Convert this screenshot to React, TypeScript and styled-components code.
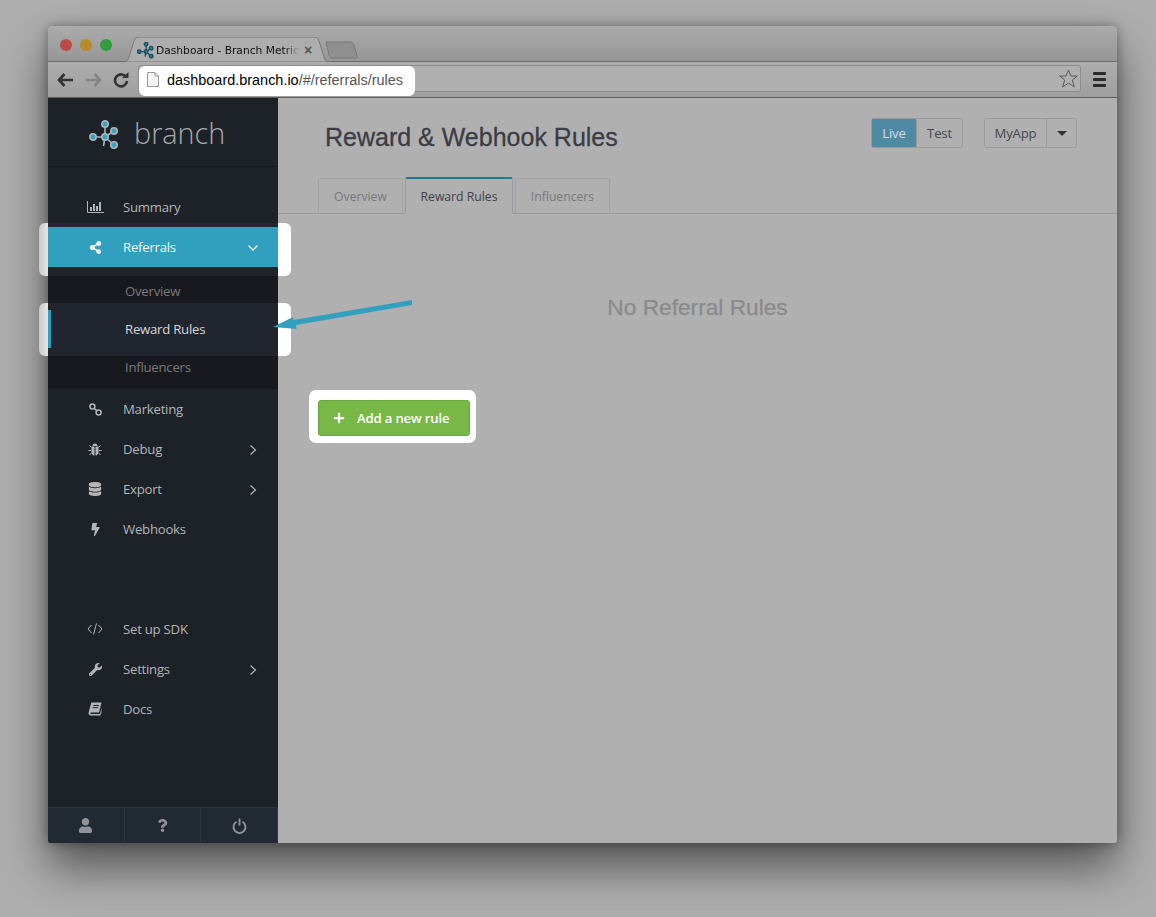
import React from 'react';
import styled, { createGlobalStyle } from 'styled-components';
import { FaBolt, FaDatabase, FaPlus, FaQuestion, FaShareAlt, FaUser, FaWrench } from 'react-icons/fa';

const Global = createGlobalStyle`
  html, body {
    margin: 0;
    padding: 0;
    background: #aeaeae;
  }
  * {
    box-sizing: border-box;
  }
`;

const Page = styled.div`
  width: 1156px;
  height: 917px;
  padding: 26px 39px 74px 48px;
  overflow: hidden;
  background: #aeaeae;
`;

const Window = styled.div`
  position: relative;
  display: flex;
  flex-direction: column;
  height: 817px;
  border-radius: 5px 5px 3px 3px;
  background: #b0b0b0;
  box-shadow: 0 24px 46px rgba(0, 0, 0, 0.52), 0 0 12px rgba(0, 0, 0, 0.35);
`;

const TabStrip = styled.div`
  display: flex;
  align-items: flex-end;
  height: 36px;
  padding-left: 12px;
  border-radius: 5px 5px 0 0;
  border-bottom: 1px solid #6e6e6e;
  background: linear-gradient(#ababab, #969696);
`;

const Lights = styled.div`
  display: flex;
  gap: 8px;
  align-self: center;
  margin: 2px 11px 0 0;
`;

const Light = styled.span<{ $color: string }>`
  width: 12px;
  height: 12px;
  border-radius: 50%;
  background: ${(p) => p.$color};
`;

const BrowserTab = styled.div`
  position: relative;
  display: flex;
  align-items: center;
  width: 207px;
  height: 25px;
  margin: 0 0 -1px 0;
  padding: 1px 0 0 14px;
`;

const TabShape = styled.svg`
  position: absolute;
  left: 0;
  top: 0;
`;

const TabTitle = styled.span`
  position: relative;
  margin-left: 2px;
  white-space: nowrap;
  font: 10.7px 'DejaVu Sans', sans-serif;
  color: #111;
  -webkit-mask-image: linear-gradient(90deg, #000 90%, transparent);
  mask-image: linear-gradient(90deg, #000 90%, transparent);
`;

const TabClose = styled.span`
  position: relative;
  margin-left: 5px;
  font: bold 14px 'Liberation Sans', sans-serif;
  color: #555;
`;

const NewTab = styled.svg`
  margin: 0 0 2px -5px;
`;

const Toolbar = styled.div`
  display: flex;
  align-items: center;
  height: 36px;
  padding: 0 11px 0 9px;
  border-bottom: 1px solid #5f5f5f;
  background: linear-gradient(#adadad, #9f9f9f);
`;

const NavIcon = styled.svg<{ $gap?: number }>`
  margin-right: ${(p) => p.$gap ?? 11}px;
`;

const Omnibox = styled.div`
  display: flex;
  flex: 1;
  align-items: flex-start;
  justify-content: space-between;
  height: 27px;
  margin: -2px 12px 0 9px;
  border: 1px solid #8d8d8d;
  border-radius: 3px;
  background: #b0b0b0;
`;

const UrlChip = styled.div`
  position: relative;
  z-index: 2;
  display: flex;
  align-items: center;
  width: 276px;
  height: 30px;
  margin: 0;
  padding: 0 0 3px 8px;
  border-radius: 6px;
  background: #fff;
  font: 14.45px 'Liberation Sans', sans-serif;
  color: #000;
`;

const UrlPath = styled.span`
  color: #555;
`;

const PageIcon = styled.svg`
  margin-right: 8px;
`;

const StarIcon = styled.svg`
  margin: 3px 2px 0 0;
`;

const Burger = styled.div`
  display: flex;
  flex-direction: column;
  gap: 3px;
  width: 13px;
  margin-top: -1px;
`;

const BurgerBar = styled.span`
  height: 3px;
  border-radius: 1px;
  background: #2b2b2b;
`;

const Body = styled.div`
  display: flex;
  flex: 1;
  min-height: 0;
`;

const Sidebar = styled.aside`
  position: relative;
  z-index: 1;
  display: flex;
  flex-direction: column;
  width: 230px;
  border-radius: 0 0 0 3px;
  background: #1d2128;
`;

const LogoBar = styled.div`
  display: flex;
  align-items: center;
  gap: 15px;
  height: 69px;
  padding-left: 41px;
  border-bottom: 1px solid #171a1f;
`;

const LogoText = styled.span`
  font: 300 28.8px 'Open Sans', sans-serif;
  color: #a7a9ab;
`;

const LogoMark = styled.svg<{ $shift: number }>`
  position: relative;
  flex: none;
  margin-top: ${(p) => p.$shift}px;
`;

const NavList = styled.nav`
  display: flex;
  flex-direction: column;
  flex: 1;
  padding-top: 20px;
`;

const NavGroup = styled.div`
  margin-bottom: 60px;
`;

const NavRow = styled.div<{ $open?: boolean }>`
  position: relative;
  display: flex;
  align-items: center;
  height: 40px;
  padding: 0 19px 0 38px;
  font: 13.2px 'Open Sans', sans-serif;
  letter-spacing: -0.25px;
  color: ${(p) => (p.$open ? '#f2f7f9' : '#b3b5b7')};
  background: ${(p) => (p.$open ? '#31a0bf' : 'transparent')};
  box-shadow: ${(p) => (p.$open ? '0 -4px 0 #222730' : 'none')};

  &::before {
    content: ${(p) => (p.$open ? "''" : 'none')};
    position: absolute;
    inset: -4px -13px -9px -9px;
    z-index: -1;
    border-radius: 6px;
    background: linear-gradient(90deg, #c9c9c9, #e4e4e4 9px, #fff 9px);
  }
`;

const RowLabel = styled.span`
  margin-bottom: 0;
`;

const RowIcon = styled.span`
  display: flex;
  justify-content: center;
  width: 18px;
  margin-right: 19px;
  font-size: 14px;
`;

const RowChevron = styled.svg<{ $right?: number }>`
  margin: 2px ${(p) => p.$right ?? 0}px 0 auto;
`;

const SubMenu = styled.div`
  padding: 5px 0 3px;
  background: linear-gradient(#20252c 9px, #17191e 9px);
`;

const SubRow = styled.div<{ $active?: boolean }>`
  position: relative;
  display: flex;
  align-items: center;
  height: 38px;
  padding: 0 0 0 77px;
  font: 13.2px 'Open Sans', sans-serif;
  letter-spacing: -0.25px;
  color: ${(p) => (p.$active ? '#d5d6d8' : '#77797c')};
  background: ${(p) => (p.$active ? '#21252d' : 'transparent')};
  box-shadow: ${(p) => (p.$active ? 'inset 3px 0 0 #31a0bf, 0 -7px 0 #21252d, 0 8px 0 #21252d' : 'none')};

  &::before {
    content: ${(p) => (p.$active ? "''" : 'none')};
    position: absolute;
    inset: -7px -13px -8px -9px;
    z-index: -1;
    border-radius: 6px;
    background: linear-gradient(90deg, #c9c9c9, #e4e4e4 9px, #fff 9px);
  }
`;

const SideFooter = styled.div`
  display: flex;
  height: 36px;
  border-top: 1px solid #2c343c;
  border-radius: 0 0 0 3px;
  background: #212933;
`;

const FooterCell = styled.div`
  display: flex;
  flex: 1;
  align-items: center;
  justify-content: center;
  border-right: 1px solid #2c343c;
  font-size: 15px;
  color: #8f9296;
`;

const Main = styled.main`
  flex: 1;
  min-width: 0;
`;

const Header = styled.header`
  display: flex;
  justify-content: space-between;
  height: 79px;
  padding: 20px 40px 0 47px;
`;

const Title = styled.h1`
  margin: 0;
  font: 400 25px/38px 'Liberation Sans', sans-serif;
  color: #3b3c45;
  -webkit-text-stroke: 0.3px #3b3c45;
`;

const Controls = styled.div`
  display: flex;
  gap: 21px;
  align-items: flex-start;
`;

const BtnGroup = styled.div`
  display: flex;
  height: 30px;
  border: 1px solid #9a9a9a;
  border-radius: 3px;
`;

const GroupBtn = styled.div<{ $active?: boolean; $width: number }>`
  display: flex;
  align-items: center;
  justify-content: center;
  width: ${(p) => p.$width}px;
  font: 13.2px 'Open Sans', sans-serif;
  letter-spacing: -0.2px;
  color: ${(p) => (p.$active ? '#d3dde2' : '#46474f')};
  background: ${(p) => (p.$active ? '#4f8aa5' : 'transparent')};
  & + & {
    border-left: 1px solid #9a9a9a;
  }
`;

const Caret = styled.span`
  border-top: 5px solid #33343c;
  border-left: 5px solid transparent;
  border-right: 5px solid transparent;
`;

const Tabs = styled.div`
  display: flex;
  align-items: flex-end;
  gap: 2px;
  height: 37px;
  padding-left: 40px;
  border-bottom: 1px solid #9a9aa2;
`;

const PageTab = styled.div<{ $active?: boolean; $width: number }>`
  display: flex;
  align-items: center;
  justify-content: center;
  width: ${(p) => p.$width}px;
  height: ${(p) => (p.$active ? 37 : 35)}px;
  margin-bottom: ${(p) => (p.$active ? -1 : 0)}px;
  border: 1px solid ${(p) => (p.$active ? '#9a9aa2' : '#a3a3a3')};
  border-top: ${(p) => (p.$active ? '2px solid #1f7a94' : '1px solid #a3a3a3')};
  border-bottom: ${(p) => (p.$active ? '1px solid #b0b0b0' : '0')};
  border-radius: 2px 2px 0 0;
  font: 12.2px 'Open Sans', sans-serif;
  color: ${(p) => (p.$active ? '#3f4048' : '#77787c')};
`;

const Empty = styled.div`
  padding-top: 79px;
  text-align: center;
  font: 22.7px/28px 'Liberation Sans', sans-serif;
  color: #8a8a8c;
  -webkit-text-stroke: 0.25px #8a8a8c;
`;

const AddWrap = styled.div`
  position: relative;
  width: max-content;
  margin: 79px 0 0 40px;

  &::before {
    content: '';
    position: absolute;
    inset: -10px -6px -7px -9px;
    border-radius: 7px;
    background: #fff;
  }
`;

const AddButton = styled.button`
  position: relative;
  display: flex;
  align-items: center;
  gap: 12px;
  width: 152px;
  height: 36px;
  padding: 0 0 0 14px;
  border: 1px solid #6aa63c;
  border-radius: 3px;
  background: #78b846;
  font: 600 13.2px 'Open Sans', sans-serif;
  letter-spacing: -0.2px;
  color: #fff;
`;

const Callout = styled.svg`
  position: absolute;
  left: 220px;
  top: 270px;
  z-index: 3;
`;

const Logo = ({ size, dark, shift = 0 }: { size: number; dark?: boolean; shift?: number }) => (
  <LogoMark width={size} height={size} viewBox="0 0 30 30" $shift={shift}>
    <g stroke={dark ? '#1d4f5f' : '#aab4b8'} strokeWidth={dark ? 2.4 : 1.6}>
      <path d="M16 4V17M25 11L16 17M4 17H16M25 25L16 17M16 17L14.5 26" fill="none" />
      {[[16, 4], [25, 11], [16, 17], [4, 17], [25, 25]].map(([cx, cy]) => (
        <circle key={`${cx}-${cy}`} cx={cx} cy={cy} r={3.2} fill={dark ? '#2b7f98' : '#3aa3c2'} />
      ))}
    </g>
  </LogoMark>
);

const ChevronRight = () => (
  <RowChevron $right={2} width="8" height="12" viewBox="0 0 8 12">
    <path d="M1.5 1.5L6.5 6L1.5 10.5" fill="none" stroke="currentColor" strokeWidth="1.2" />
  </RowChevron>
);

const ChevronDown = () => (
  <RowChevron width="12" height="8" viewBox="0 0 12 8">
    <path d="M1.5 1.5L6 6L10.5 1.5" fill="none" stroke="currentColor" strokeWidth="1.3" />
  </RowChevron>
);

const BarsIcon = () => (
  <svg width="17" height="12" viewBox="0 0 17 12">
    <path d="M.5 0V11.5H17" fill="none" stroke="currentColor" />
    <path d="M3 6h2v4H3zM6 3h2v7H6zM9 5h2v5H9zM12 1h2v9h-2z" fill="currentColor" />
  </svg>
);

const ChainIcon = () => (
  <svg width="13" height="13" viewBox="0 0 13 13">
    <g fill="none" stroke="currentColor" strokeWidth="1.5">
      <circle cx="3.4" cy="3.4" r="2.5" />
      <circle cx="9.6" cy="9.6" r="2.5" />
      <path d="M5 5L8 8" />
    </g>
  </svg>
);

const CodeIcon = () => (
  <svg width="16" height="12" viewBox="0 0 16 12">
    <path d="M4.5 2L1 6L4.5 10M11.5 2L15 6L11.5 10M9.5 .5L6.5 11.5" fill="none" stroke="currentColor" />
  </svg>
);

const BugIcon = () => (
  <svg width="14" height="14" viewBox="0 0 14 14">
    <path d="M4.5 4A2.5 2.5 0 0 1 9.5 4Z" fill="currentColor" />
    <path d="M3.5 4.5H6.5V13.5C4.5 13.5 3.5 11.5 3.5 9ZM7.5 4.5H10.5V9C10.5 11.5 9.5 13.5 7.5 13.5Z" fill="currentColor" />
    <path d="M3.5 8.5H.3M3.7 5.5L1.5 3.5M3.8 10.5L1.5 13M10.5 8.5H13.7M10.3 5.5L12.5 3.5M10.2 10.5L12.5 13" fill="none" stroke="currentColor" />
  </svg>
);

const BookIcon = () => (
  <svg width="14" height="14" viewBox="0 0 14 14">
    <path d="M3.3 .5H13.5L11 10.5H3.2C2 10.5 1.9 12 3.2 12H12L13.5 5.5V10.5L12.3 13.5H2.8C1 13.5 .2 12 .7 10.3Z" fill="currentColor" />
    <path d="M5.3 3.5H10.8M4.7 5.7H10.2" fill="none" stroke="#1d2128" />
  </svg>
);

const PowerIcon = () => (
  <svg width="15" height="16" viewBox="0 0 15 16">
    <path d="M4.5 3.8A6 6 0 1 0 10.5 3.8" fill="none" stroke="currentColor" strokeWidth="1.9" />
    <path d="M7.5 .5V7.5" fill="none" stroke="currentColor" strokeWidth="1.9" />
  </svg>
);

const items = [
  { label: 'Marketing', icon: <ChainIcon /> },
  { label: 'Debug', icon: <BugIcon />, more: true },
  { label: 'Export', icon: <FaDatabase size={14} />, more: true },
  { label: 'Webhooks', icon: <FaBolt size={13} /> },
];

const lowerItems = [
  { label: 'Set up SDK', icon: <CodeIcon /> },
  { label: 'Settings', icon: <FaWrench size={13} />, more: true },
  { label: 'Docs', icon: <BookIcon /> },
];

export default function App() {
  return (
    <Page>
      <Global />
      <Window>
        <TabStrip>
          <Lights>
            <Light $color="#b84b45" />
            <Light $color="#b78a2c" />
            <Light $color="#2f9e3d" />
          </Lights>
          <BrowserTab>
            <TabShape width="207" height="25" viewBox="0 0 207 25">
              <path d="M0 25C4 25 5 23 6 20L11 4C12 1 13 0 16 0H191C194 0 195 1 196 4L201 20C202 23 203 25 207 25Z" fill="#adadad" stroke="#777" />
            </TabShape>
            <Logo size={17} dark />
            <TabTitle>Dashboard - Branch Metric</TabTitle>
            <TabClose>×</TabClose>
          </BrowserTab>
          <NewTab width="33" height="18" viewBox="0 0 33 18">
            <path d="M1 1H25C27 1 28 2 29 4L32 15C32.5 17 31 17 30 17H7C5 17 5 16 4 14Z" fill="#8f8f8f" stroke="#777" />
          </NewTab>
        </TabStrip>
        <Toolbar>
          <NavIcon width="17" height="14" viewBox="0 0 17 14">
            <path d="M7.5 1L2 7L7.5 13M2.5 7H16" fill="none" stroke="#333" strokeWidth="2.6" />
          </NavIcon>
          <NavIcon width="17" height="14" viewBox="0 0 17 14">
            <path d="M9.5 1L15 7L9.5 13M14.5 7H1" fill="none" stroke="#858585" strokeWidth="2.6" />
          </NavIcon>
          <NavIcon $gap={0} width="16" height="16" viewBox="0 0 16 16">
            <path d="M13 5A6 6 0 1 0 14 9" fill="none" stroke="#333" strokeWidth="2.6" />
            <path d="M9 6H15.5V0Z" fill="#333" />
          </NavIcon>
          <Omnibox>
            <UrlChip>
              <PageIcon width="12" height="15" viewBox="0 0 12 15">
                <path d="M.5 .5H8L11.5 4V14.5H.5Z" fill="#f4f4f4" stroke="#999" />
                <path d="M8 .5V4H11.5" fill="none" stroke="#999" />
              </PageIcon>
              dashboard.branch.io<UrlPath>/#/referrals/rules</UrlPath>
            </UrlChip>
            <StarIcon width="19" height="19" viewBox="0 0 19 19">
              <path d="M9.5 1L12 7H18.3L13.3 11L15.3 18L9.5 14L3.7 18L5.7 11L.7 7H7Z" fill="none" stroke="#5a5a5a" />
            </StarIcon>
          </Omnibox>
          <Burger>
            <BurgerBar />
            <BurgerBar />
            <BurgerBar />
          </Burger>
        </Toolbar>
        <Body>
          <Sidebar>
            <LogoBar>
              <Logo size={30} shift={5} />
              <LogoText>branch</LogoText>
            </LogoBar>
            <NavList>
              <NavRow>
                <RowIcon><BarsIcon /></RowIcon>
                <RowLabel>Summary</RowLabel>
              </NavRow>
              <NavRow $open>
                <RowIcon><FaShareAlt size={13} /></RowIcon>
                <RowLabel>Referrals</RowLabel>
                <ChevronDown />
              </NavRow>
              <SubMenu>
                <SubRow>Overview</SubRow>
                <SubRow $active>Reward Rules</SubRow>
                <SubRow>Influencers</SubRow>
              </SubMenu>
              <NavGroup>
                {items.map((item) => (
                  <NavRow key={item.label}>
                    <RowIcon>{item.icon}</RowIcon>
                    <RowLabel>{item.label}</RowLabel>
                    {item.more && <ChevronRight />}
                  </NavRow>
                ))}
              </NavGroup>
              {lowerItems.map((item) => (
                <NavRow key={item.label}>
                  <RowIcon>{item.icon}</RowIcon>
                  <RowLabel>{item.label}</RowLabel>
                  {item.more && <ChevronRight />}
                </NavRow>
              ))}
            </NavList>
            <SideFooter>
              <FooterCell><FaUser /></FooterCell>
              <FooterCell><FaQuestion size={13} /></FooterCell>
              <FooterCell><PowerIcon /></FooterCell>
            </SideFooter>
          </Sidebar>
          <Main>
            <Header>
              <Title>Reward &amp; Webhook Rules</Title>
              <Controls>
                <BtnGroup>
                  <GroupBtn $active $width={44}>Live</GroupBtn>
                  <GroupBtn $width={46}>Test</GroupBtn>
                </BtnGroup>
                <BtnGroup>
                  <GroupBtn $width={61}>MyApp</GroupBtn>
                  <GroupBtn $width={30}><Caret /></GroupBtn>
                </BtnGroup>
              </Controls>
            </Header>
            <Tabs>
              <PageTab $width={85}>Overview</PageTab>
              <PageTab $active $width={108}>Reward Rules</PageTab>
              <PageTab $width={95}>Influencers</PageTab>
            </Tabs>
            <Empty>No Referral Rules</Empty>
            <AddWrap>
              <AddButton>
                <FaPlus size={12} />
                Add a new rule
              </AddButton>
            </AddWrap>
          </Main>
        </Body>
        <Callout width="150" height="40" viewBox="0 0 150 40">
          <path d="M144 4L144 9L28 29L28.5 33L5 31L25 21L25.5 24Z" fill="#31a0bf" />
        </Callout>
      </Window>
    </Page>
  );
}
